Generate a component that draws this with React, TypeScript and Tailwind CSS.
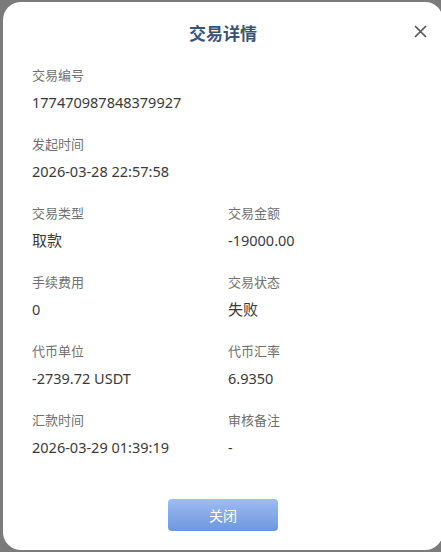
import React from 'react';

interface Field {
  label: string;
  value: string;
  big?: boolean;
}

const rows: Field[][] = [
  [{ label: '交易编号', value: '177470987848379927' }],
  [{ label: '发起时间', value: '2026-03-28 22:57:58' }],
  [
    { label: '交易类型', value: '取款', big: true },
    { label: '交易金额', value: '-19000.00' },
  ],
  [
    { label: '手续费用', value: '0' },
    { label: '交易状态', value: '失败', big: true },
  ],
  [
    { label: '代币单位', value: '-2739.72 USDT' },
    { label: '代币汇率', value: '6.9350' },
  ],
  [
    { label: '汇款时间', value: '2026-03-29 01:39:19' },
    { label: '审核备注', value: '-' },
  ],
];

const FieldItem: React.FC<{ field: Field }> = ({ field }) => (
  <div className="flex flex-col">
    <span className="text-[13px] leading-5 text-[#707070]">{field.label}</span>
    <span className={`mt-[7px] leading-5 text-[#3a3a3a] ${field.big ? 'text-[15px]' : 'text-[14.5px]'}`}>
      {field.value}
    </span>
  </div>
);

const App: React.FC = () => {
  return (
    <div
      className="min-h-[552px] w-full bg-[#7b7b7b] pt-[2px] pl-[3px] overflow-hidden"
      style={{ fontFamily: '"Noto Sans", "Noto Sans CJK SC", sans-serif' }}
    >
      <div className="relative -mr-[2px] bg-white rounded-[18px] pt-[20px] pb-[19px] px-[29px]">
        <h2 className="text-center text-[17px] leading-6 font-bold text-[#3a5478]">交易详情</h2>
        <button className="absolute right-[14px] top-[20px] w-[18px] h-[18px] flex items-center justify-center text-[#555]">
          <svg width="13" height="13" viewBox="0 0 13 13" fill="none" stroke="currentColor" strokeWidth="1.7">
            <path d="M1 1L12 12M12 1L1 12" />
          </svg>
        </button>

        <div className="mt-[19px] flex flex-col gap-[22px]">
          {rows.map((row, i) => (
            <div key={i} className="grid grid-cols-[196px_1fr]">
              {row.map((f) => (
                <FieldItem key={f.label} field={f} />
              ))}
            </div>
          ))}
        </div>

        <div className="mt-[42px] flex justify-center">
          <button className="w-[110px] h-[32px] rounded-[4px] bg-gradient-to-b from-[#9ebcf0] to-[#6e97df] text-white text-[14px]">
            关闭
          </button>
        </div>
      </div>
    </div>
  );
};

export default App;
